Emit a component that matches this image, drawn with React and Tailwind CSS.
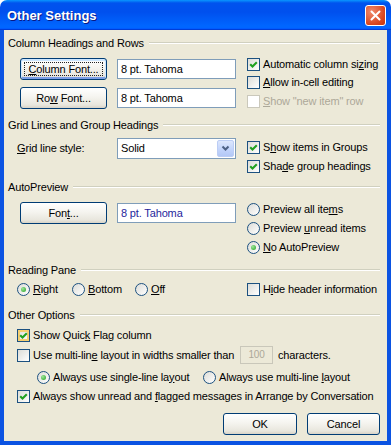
import React from "react";

function GroupHeader({ children, className = "" }) {
  return (
    <div className={`flex items-center h-[14px] pr-[3px] ${className}`}>
      <span className="whitespace-nowrap">{children}</span>
      <div className="flex-1 ml-[5px] h-[2px] border-t border-t-[#d0d0bf] border-b border-b-white" />
    </div>
  );
}

function CheckBox({ checked, disabled, hot }) {
  return (
    <span
      className={`w-[13px] h-[13px] shrink-0 border flex items-center justify-center ${
        disabled
          ? "border-[#cac8bb] bg-white"
          : "border-[#1c5180] bg-[linear-gradient(135deg,#dcdcd7,#ffffff)]"
      } ${hot ? "shadow-[inset_0_0_0_2px_#f5cf72]" : ""}`}
    >
      {checked && (
        <svg width="9" height="9" viewBox="0 0 9 9">
          <path d="M1.2 4.2 L3.5 6.5 L7.8 2.2" fill="none" stroke="#21a121" strokeWidth="2.1" />
        </svg>
      )}
    </span>
  );
}

function Radio({ checked }) {
  return (
    <span className="w-[13px] h-[13px] shrink-0 rounded-full border border-[#1c5180] bg-[linear-gradient(135deg,#dcdcd7,#ffffff)] flex items-center justify-center">
      {checked && (
        <span className="w-[5px] h-[5px] rounded-full bg-[radial-gradient(circle_at_35%_35%,#9ee69a,#21a121)]" />
      )}
    </span>
  );
}

function Option({ type = "check", checked, disabled, hot, children, className = "" }) {
  return (
    <div className={`flex items-center gap-[3px] whitespace-nowrap ${disabled ? "text-[#aca899]" : ""} ${className}`}>
      {type === "check" ? (
        <CheckBox checked={checked} disabled={disabled} hot={hot} />
      ) : (
        <Radio checked={checked} />
      )}
      <span>{children}</span>
    </div>
  );
}

function XPButton({ children, focused, className = "" }) {
  return (
    <button
      className={`relative h-[22px] rounded-[3px] border border-[#003c74] bg-[linear-gradient(to_bottom,#ffffff,#f5f4ef_45%,#e8e6dd_85%,#d8d3c7)] flex items-center justify-center text-black ${
        focused ? "shadow-[inset_0_1px_0_1px_#cee7ff,inset_0_-1px_0_1px_#7b9ee6]" : ""
      } ${className}`}
    >
      {focused && <span className="absolute inset-[3px] border border-dotted border-[#222]" />}
      <span className="relative">{children}</span>
    </button>
  );
}

function TextField({ children, className = "" }) {
  return (
    <div className={`w-[119px] h-[20px] border border-[#7f9db9] bg-white flex items-center pl-[3px] ${className}`}>
      {children}
    </div>
  );
}

export default function App() {
  return (
    <div className="w-[391px] h-[445px] bg-white font-['Liberation_Sans',Arial,sans-serif] text-[11px] tracking-[-0.15px] text-black leading-none">
      <div className="w-[391px] h-[445px] flex flex-col">
        {/* title bar */}
        <div className="h-[30px] shrink-0 rounded-t-[7px] bg-[linear-gradient(to_bottom,#0997ff,#0053ee_10%,#0050ee_40%,#0066ff_86%,#0066ff_92%,#005bff_95%,#003dd7_97%,#003dd7)] flex items-center pl-[7px] pr-[5px]">
          <span className="flex-1 text-white font-bold text-[13px] tracking-normal [text-shadow:1px_1px_0_#0a1883]">
            Other Settings
          </span>
          <div className="w-[21px] h-[21px] rounded-[3px] border border-white bg-[radial-gradient(circle_at_30%_30%,#f08a6c,#d8441c_70%,#c1360f)] flex items-center justify-center">
            <svg width="11" height="11" viewBox="0 0 11 11">
              <path d="M1.5 1.5 L9.5 9.5 M9.5 1.5 L1.5 9.5" stroke="white" strokeWidth="2" strokeLinecap="round" />
            </svg>
          </div>
        </div>

        {/* body */}
        <div className="flex-1 bg-[#ece9d8] border-x-4 border-b-4 border-[#0b53e2] px-[4px] pt-[6px]">
          <GroupHeader>Column Headings and Rows</GroupHeader>
          <div className="mt-[8px] h-[51px] flex items-start pl-[12px]">
            <div className="flex flex-col gap-[7px]">
              <div className="flex items-center gap-[10px]">
                <XPButton focused className="w-[87px]">
                  <u>C</u>olumn Font...
                </XPButton>
                <TextField>8 pt. Tahoma</TextField>
              </div>
              <div className="flex items-center gap-[10px]">
                <XPButton className="w-[87px]">
                  Ro<u>w</u> Font...
                </XPButton>
                <TextField>8 pt. Tahoma</TextField>
              </div>
            </div>
            <div className="ml-[11px] -mt-[3px] flex flex-col">
              <Option checked className="h-[18px]">
                Automatic column si<u>z</u>ing
              </Option>
              <Option className="h-[19px]">
                <u>A</u>llow in-cell editing
              </Option>
              <Option disabled className="h-[18px]">
                <u>S</u>how "new item" row
              </Option>
            </div>
          </div>

          <GroupHeader className="mt-[9px]">Grid Lines and Group Headings</GroupHeader>
          <div className="mt-[6px] h-[38px] flex items-start pl-[9px]">
            <div className="flex items-center h-[21px]">
              <span className="w-[100px]">
                <u>G</u>rid line style:
              </span>
              <div className="w-[119px] h-[21px] border border-[#7f9db9] bg-white flex items-center pl-[3px] pr-[1px]">
                <span className="flex-1">Solid</span>
                <div className="w-[17px] h-[17px] rounded-[2px] border border-[#bccdf5] bg-[linear-gradient(to_bottom,#dde7fd,#c1d3fb_60%,#b3c8f6)] flex items-center justify-center">
                  <svg width="9" height="7" viewBox="0 0 9 7">
                    <path d="M1.5 1.5 L4.5 4.5 L7.5 1.5" fill="none" stroke="#4d6185" strokeWidth="2" />
                  </svg>
                </div>
              </div>
            </div>
            <div className="ml-[11px] flex flex-col">
              <Option checked className="h-[19px]">
                S<u>h</u>ow items in Groups
              </Option>
              <Option checked className="h-[19px]">
                Sha<u>d</u>e group headings
              </Option>
            </div>
          </div>

          <GroupHeader className="mt-[4px]">AutoPreview</GroupHeader>
          <div className="mt-[6px] h-[57px] flex items-start pl-[12px]">
            <div className="flex items-center gap-[10px] pt-[2px]">
              <XPButton className="w-[87px] h-[21px]">
                Fon<u>t</u>...
              </XPButton>
              <TextField className="text-[#1f1f9c]">8 pt. Tahoma</TextField>
            </div>
            <div className="ml-[11px] flex flex-col">
              <Option type="radio" className="h-[19px]">
                Preview all ite<u>m</u>s
              </Option>
              <Option type="radio" className="h-[19px]">
                Preview <u>u</u>nread items
              </Option>
              <Option type="radio" checked className="h-[19px]">
                <u>N</u>o AutoPreview
              </Option>
            </div>
          </div>

          <GroupHeader className="mt-[6px]">Reading Pane</GroupHeader>
          <div className="mt-[3px] h-[19px] flex items-center pl-[9px]">
            <Option type="radio" checked className="w-[55px]">
              <u>R</u>ight
            </Option>
            <Option type="radio" className="w-[63px]">
              <u>B</u>ottom
            </Option>
            <Option type="radio" className="w-[112px]">
              <u>O</u>ff
            </Option>
            <Option>
              H<u>i</u>de header information
            </Option>
          </div>

          <GroupHeader className="mt-[9px]">Other Options</GroupHeader>
          <div className="mt-[4px] pl-[9px] flex flex-col">
            <Option checked hot className="h-[18px]">
              Show Quic<u>k</u> Flag column
            </Option>
            <div className="h-[22px] flex items-center">
              <Option className="w-[223px]">
                Use multi-lin<u>e</u> layout in widths smaller than
              </Option>
              <div className="w-[33px] h-[18px] border border-[#c9c7ba] bg-[#ece9d8] text-[#aca899] flex items-center justify-center text-[10px]">
                100
              </div>
              <span className="ml-[5px]">characters.</span>
            </div>
            <div className="h-[22px] flex items-center pl-[20px]">
              <Option type="radio" checked className="w-[166px]">
                Always use single-line la<u>y</u>out
              </Option>
              <Option type="radio">
                Always use multi-line <u>l</u>ayout
              </Option>
            </div>
            <Option checked className="h-[16px]">
              Always show unread and <u>f</u>lagged messages in Arrange by Conversation
            </Option>
          </div>

          <div className="mt-[9px] flex justify-end gap-[10px] pr-[3px]">
            <XPButton className="w-[74px]">OK</XPButton>
            <XPButton className="w-[73px]">Cancel</XPButton>
          </div>
        </div>
      </div>
    </div>
  );
}
